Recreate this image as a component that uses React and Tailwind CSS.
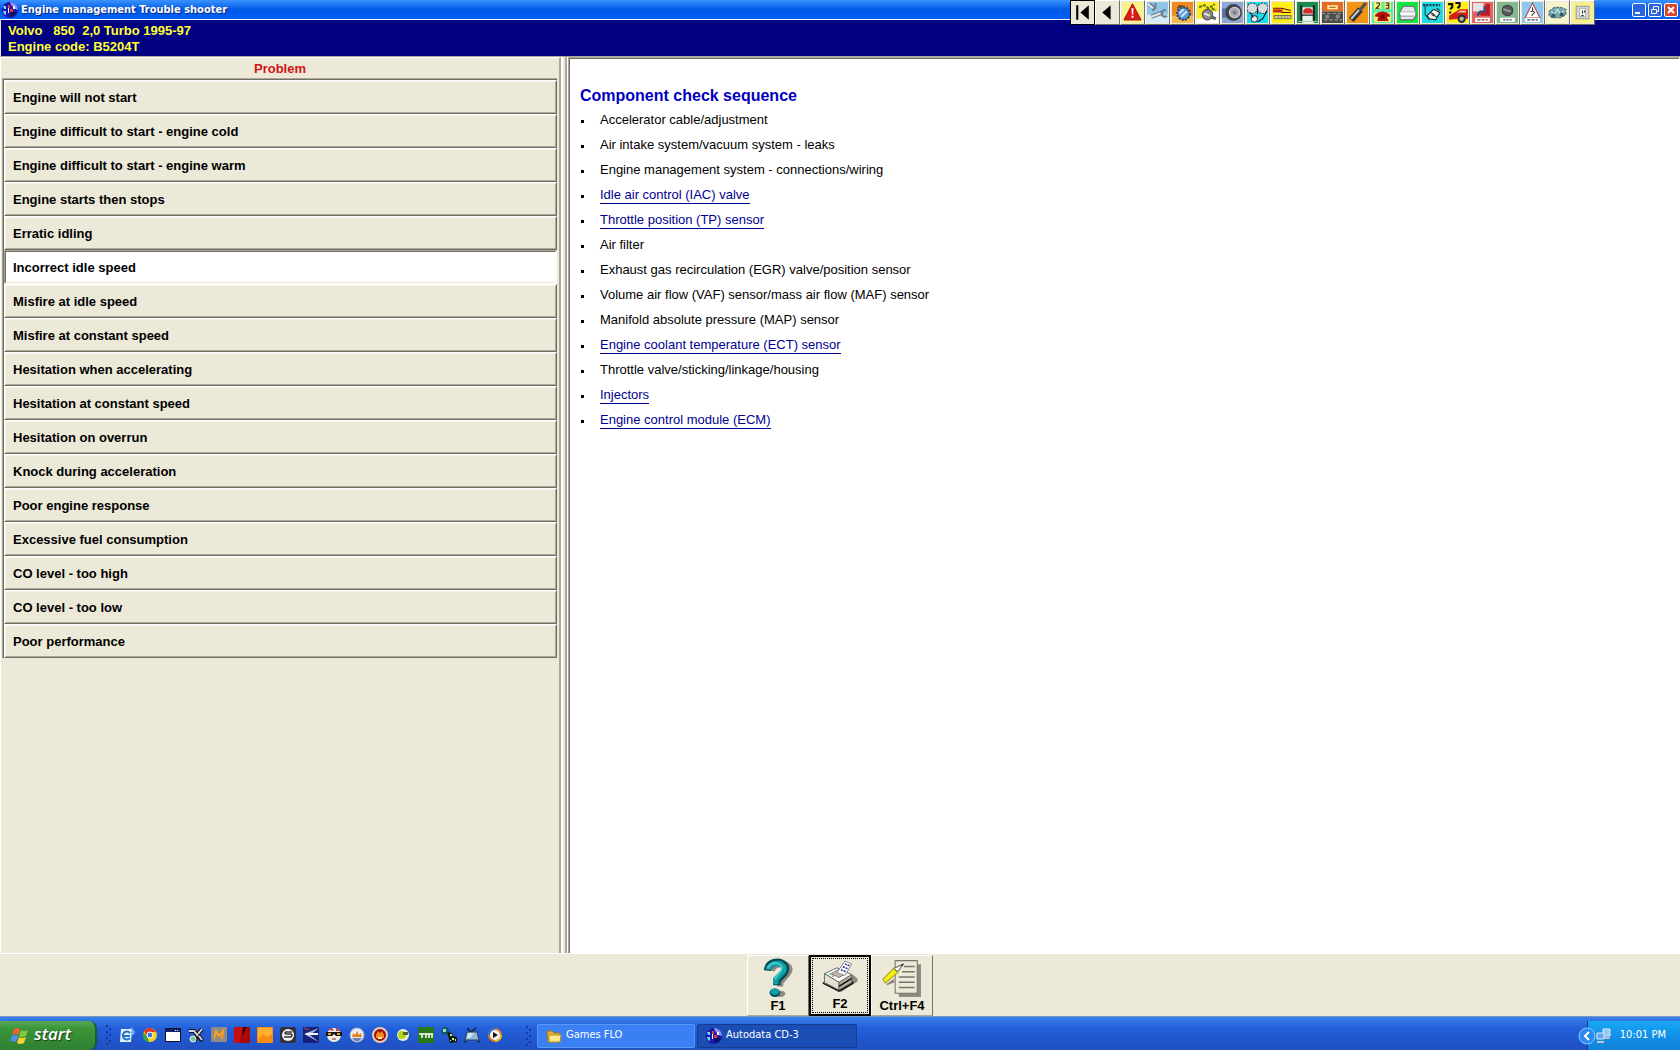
import { useState } from "react";

const problems = [
  "Engine will not start",
  "Engine difficult to start - engine cold",
  "Engine difficult to start - engine warm",
  "Engine starts then stops",
  "Erratic idling",
  "Incorrect idle speed",
  "Misfire at idle speed",
  "Misfire at constant speed",
  "Hesitation when accelerating",
  "Hesitation at constant speed",
  "Hesitation on overrun",
  "Knock during acceleration",
  "Poor engine response",
  "Excessive fuel consumption",
  "CO level - too high",
  "CO level - too low",
  "Poor performance",
];

const checks = [
  { text: "Accelerator cable/adjustment" },
  { text: "Air intake system/vacuum system - leaks" },
  { text: "Engine management system - connections/wiring" },
  { text: "Idle air control (IAC) valve", link: true },
  { text: "Throttle position (TP) sensor", link: true },
  { text: "Air filter" },
  { text: "Exhaust gas recirculation (EGR) valve/position sensor" },
  { text: "Volume air flow (VAF) sensor/mass air flow (MAF) sensor" },
  { text: "Manifold absolute pressure (MAP) sensor" },
  { text: "Engine coolant temperature (ECT) sensor", link: true },
  { text: "Throttle valve/sticking/linkage/housing" },
  { text: "Injectors", link: true },
  { text: "Engine control module (ECM)", link: true },
];

// toolbar drawings, 20x20 each
const tools = [
  {
    name: "First",
    art: <path fill="#000" d="M4 3h2v14H4zM16 3v14L8 10z" />,
  },
  { name: "Back", art: <path fill="#000" d="M13 3v14L5 10z" /> },
  {
    name: "Warnings",
    art: (
      <>
        <path fill="#fbf38a" d="M0 0h20v20H0z" />
        <path fill="#e01818" stroke="#b01010" strokeLinejoin="round" d="M10 2 18 17H2z" />
        <path fill="#fff" d="M9 6h2l-.4 6H9.400zM9 13h2v2H9z" />
      </>
    ),
  },
  {
    name: "Repair",
    art: (
      <>
        <path fill="#8fc6ea" d="M0 0h20v20H0z" />
        <path fill="#d8ecf8" d="M0 12h20v8H0z" />
        <path stroke="#6c7c8c" strokeWidth="4" d="M2 2l6 5M4 14l11-4" />
        <path stroke="#dfe6ec" strokeWidth="2" d="M1 2l6 5M4 14l11-4" />
        <path stroke="#708090" strokeWidth="2" d="M18 8a3 3 0 1 0 1 5M8 1v4L5 8" />
      </>
    ),
  },
  {
    name: "Timing",
    art: (
      <>
        <path fill="#f28a1c" d="M0 0h20v20H0z" />
        <path fill="#f8b850" d="M0 13h20v7H0z" />
        <circle cx="11" cy="11" r="6" fill="#5c9ad4" stroke="#24446c" strokeWidth="2" strokeDasharray="2 1" />
        <path stroke="#c8e4fa" strokeWidth="2" d="M7 11l4-4M9 14l5-5" />
        <path stroke="#303030" d="M6 4h6M5 6l3-3" />
      </>
    ),
  },
  {
    name: "Engine",
    art: (
      <>
        <path fill="#fff" d="M0 0h20v20H0z" />
        <path fill="#ffee22" d="M0 0h20v9H0zM0 9h5v7H0z" />
        <path stroke="#60780c" strokeWidth="2" strokeDasharray="3 1" d="M2 5l5-2 4 3 6-4M14 6l4 2" />
        <circle cx="10" cy="12" r="5" fill="#8c8c84" stroke="#555" />
        <path stroke="#e8e8e0" strokeWidth="2" d="M7 11l5 2" />
        <path stroke="#666" strokeWidth="3" d="M13 14l5 2" />
      </>
    ),
  },
  {
    name: "Wheels",
    art: (
      <>
        <path fill="#8fa6d8" d="M0 0h20v20H0z" />
        <path fill="#5a74b0" d="M0 6h8v9H0z" />
        <circle cx="11" cy="10" r="8" fill="#404448" />
        <circle cx="12" cy="10" r="5" fill="#a8acb0" stroke="#d4d4d4" />
        <circle cx="12" cy="10" r="2" fill="#7c8084" />
      </>
    ),
  },
  {
    name: "Belts",
    art: (
      <>
        <path fill="#18e0ee" d="M0 0h20v20H0z" />
        <circle cx="5" cy="6" r="5" fill="#d8dcdc" stroke="#445" strokeDasharray="2 1" />
        <circle cx="15" cy="6" r="5" fill="#d8dcdc" stroke="#445" strokeDasharray="2 1" />
        <circle cx="7" cy="16" r="3" fill="#eee" stroke="#445" />
        <path stroke="#112" d="M3 10l3 5M19 8l-4 8-5 3M10 6v6" />
      </>
    ),
  },
  {
    name: "Tools",
    art: (
      <>
        <path fill="#fff01c" d="M0 0h20v20H0z" />
        <path fill="#c42818" d="M1 7h9v3H1z" />
        <path stroke="#6a1010" d="M1 6h8l9 2M9 10h9" />
        <path fill="#d8d8b0" stroke="#77773c" d="M2 13h16v3H2z" />
        <path stroke="#77773c" d="M6 14v2M9 14v2M12 14v2M15 14v2" />
      </>
    ),
  },
  {
    name: "Lift",
    art: (
      <>
        <path fill="#1a8a50" d="M0 0h20v20H0z" />
        <path fill="#e4f4ea" d="M5 5h11v15H5z" />
        <path fill="#222" d="M3 3h2v15H3zM15 3h2v15h-2zM4 12h12v1H4z" />
        <path fill="#d02828" d="M6 8l2-2h5l2 2v3H6z" />
        <path fill="#a8c8b4" d="M1 18h18v1H1z" />
      </>
    ),
  },
  {
    name: "Dashboard",
    art: (
      <>
        <path fill="#e46c20" d="M0 0h20v9H0z" />
        <path fill="#4c4c4c" d="M0 9h20v11H0z" />
        <path fill="#ffe9a0" d="M5 3h10v4H5z" />
        <path stroke="#a05010" d="M7 5h6" />
        <path stroke="#989898" strokeDasharray="3 2" d="M0 11h20M2 17h17" />
        <circle cx="5" cy="14" r="2" fill="#888" />
        <circle cx="15" cy="14" r="2" fill="#888" />
      </>
    ),
  },
  {
    name: "Spark plug",
    art: (
      <>
        <path fill="#f49414" d="M0 0h20v20H0z" />
        <path stroke="#373737" strokeWidth="6" d="M4 17l9-10" />
        <path stroke="#c8c8c8" strokeWidth="2" d="M4 16l8-9" />
        <path stroke="#505050" strokeWidth="3" d="M12 8l6-7" />
      </>
    ),
  },
  {
    name: "Key codes",
    art: (
      <>
        <path fill="#58eca8" d="M0 0h20v20H0z" />
        <path fill="#fff06c" d="M2 0h7v7H2zM12 0h6v7h-6zM2 10h16v9H2z" />
        <path stroke="#222" d="M4 1h3v2L4 6h3M13 1h3v5h-3M13 3h3" />
        <path fill="#b81010" d="M3 12q7-6 14 0v2h-3l2 4H5l1-4H3z" />
        <circle cx="10" cy="14" r="2" fill="#780808" />
      </>
    ),
  },
  {
    name: "Car models",
    art: (
      <>
        <path fill="#10e840" d="M0 0h20v20H0z" />
        <path fill="#e6e6e6" stroke="#667" d="M3 9l3-5h10l2 5v5l-3 3H3v-7z" />
        <path fill="#9da5a8" d="M3 9h15v1H3zM3 13h14v1H3z" />
        <path fill="#fff" d="M3 10h14v2H3z" />
      </>
    ),
  },
  {
    name: "Injection",
    art: (
      <>
        <path fill="#20dce4" d="M0 0h20v20H0z" />
        <path stroke="#153c44" strokeWidth="2" strokeDasharray="2 1" d="M1 3h16" />
        <path stroke="#153c44" d="M3 3v9l4 5" />
        <path fill="#f4f4f4" stroke="#222" d="M5 13l6-6 6 3-4 7-6-1z" />
        <path stroke="#222" d="M9 12l5 2M14 6l3 2M8 10l4 2" />
      </>
    ),
  },
  {
    name: "Trouble shooter",
    art: (
      <>
        <path fill="#fff01c" d="M0 0h20v20H0z" />
        <path stroke="#111" strokeWidth="2" d="M1 2h4v3L3 7M3 9v2M8 1h4v3l-2 2" />
        <path fill="#d02018" d="M2 13l5-3 5-3h8v9h-7l-11 1z" />
        <path fill="#f4c0a0" d="M9 10l4-2h5v2z" />
        <circle cx="14" cy="16" r="4" fill="#333" />
        <circle cx="14" cy="16" r="2" fill="#bbb" />
      </>
    ),
  },
  {
    name: "Airbag",
    art: (
      <>
        <path fill="#e06464" d="M0 0h20v20H0z" />
        <path fill="#e4e4e8" d="M1 1h10v8H1z" />
        <path fill="#c01820" d="M13 2h4v11H8v-3h5z" />
        <path stroke="#284878" strokeWidth="2" d="M12 4v5H8l-3 4" />
        <path fill="#fff" d="M3 15h14v4H3z" />
        <path stroke="#833" strokeDasharray="3 1" d="M5 17h10" />
      </>
    ),
  },
  {
    name: "Air conditioning",
    art: (
      <>
        <path fill="#84b890" d="M0 0h20v20H0z" />
        <circle cx="10" cy="8" r="5" fill="#555b58" stroke="#38403c" />
        <path stroke="#98a09c" strokeWidth="2" d="M6 7l7 2" />
        <path fill="#fff" d="M3 15h14v4H3z" />
        <path stroke="#345" strokeDasharray="2 1" d="M6 17h8" />
      </>
    ),
  },
  {
    name: "ABS",
    art: (
      <>
        <path fill="#8cc8f0" d="M0 0h20v20H0z" />
        <path fill="#fff" stroke="#b84848" d="M10 1l7 14H3z" />
        <path stroke="#333" d="M10 5v3l2 2-3 3M8 9h2" />
        <path fill="#fff" d="M3 15h14v4H3z" />
        <path stroke="#345" strokeDasharray="3 1" d="M5 17h10" />
      </>
    ),
  },
  {
    name: "Wiring",
    art: (
      <>
        <path fill="#f6f4cc" d="M0 0h20v20H0z" />
        <path fill="#78a8b0" stroke="#486c74" strokeDasharray="3 1" d="M2 9l5-4h6l5 2v5l-5 3H5l-3-2z" />
        <path stroke="#d8ecec" d="M4 9l3 3 3-5 3 5 3-4" />
        <circle cx="6" cy="13" r="2" fill="#345c64" />
        <circle cx="14" cy="12" r="2" fill="#345c64" />
      </>
    ),
  },
  {
    name: "Immobilizer",
    art: (
      <>
        <path fill="#f8f088" d="M0 0h20v20H0z" />
        <path fill="#ddd" stroke="#999" d="M4 4h12v12H4z" />
        <path fill="#f8f8f8" stroke="#aaa" d="M7 6h6v8H7z" />
        <path stroke="#222" d="M10 8v3M12 8v2M9 13h2" />
      </>
    ),
  },
];

// quick launch drawings, 16x16 each
const launchers = [
  {
    name: "Internet Explorer",
    art: (
      <>
        <path fill="#e8f4fc" d="M2 2h11l-1 13H1z" />
        <path stroke="#1c78c8" strokeWidth="2" d="M11 9H5M11 6a4 4 0 1 0 0 5" />
        <path stroke="#6cb8f0" strokeWidth="2" d="M12 1l3 4-2 3" />
      </>
    ),
  },
  {
    name: "Chrome",
    art: (
      <>
        <circle cx="8" cy="8" r="7" fill="#f8d020" />
        <path fill="#dc3828" d="M2 4a7 7 0 0 1 12 1H8L5 9z" />
        <path fill="#38a048" d="M1.500 5 6 11l1 4A7 7 0 0 1 1.500 5z" />
        <circle cx="8" cy="8" r="3" fill="#3878d8" stroke="#fff" />
      </>
    ),
  },
  {
    name: "Command window",
    art: (
      <>
        <path fill="#fff" stroke="#112" d="M.5 1.500h15v13H.5z" />
        <path fill="#102070" d="M1 2h14v3H1z" />
        <path fill="#fff" d="M10 3h1v1h-1zM12 3h1v1h-1z" />
      </>
    ),
  },
  {
    name: "Utilities",
    art: (
      <>
        <path stroke="#111" strokeWidth="4" d="M1 4h5l4 5M14 2l-4 5-3 6M11 9l3 5" />
        <path stroke="#d8d8d8" strokeWidth="2" d="M1 4h5l4 5M14 2l-4 5M11 9l3 4" />
        <circle cx="5" cy="12" r="3" fill="#70c890" stroke="#eee" />
      </>
    ),
  },
  {
    name: "M player",
    art: (
      <>
        <rect width="16" height="15" rx="1" fill="#8c8c88" />
        <path stroke="#ffa018" strokeWidth="2" d="M3 12l2-8 3 5 4-5-1 8" />
      </>
    ),
  },
  {
    name: "Red app",
    art: (
      <>
        <path fill="#a80808" d="M0 0h16v16H0z" />
        <path fill="#c81010" d="M0 0h9L5 16H0z" />
        <path fill="#300404" d="M9 0h4L8 9z" />
      </>
    ),
  },
  {
    name: "Orange app",
    art: (
      <>
        <rect width="16" height="16" rx="1" fill="#f88c10" />
        <path fill="#ffb030" d="M1 1h14v6l-5 3-4-3-5 5z" />
      </>
    ),
  },
  {
    name: "Sync",
    art: (
      <>
        <rect width="16" height="16" rx="2" fill="#303438" />
        <circle cx="8" cy="8" r="6" fill="#f4f4f4" />
        <path stroke="#303438" strokeWidth="1.500" d="M12 5H6q-2 1 0 2h5q2 1 0 3H4" />
      </>
    ),
  },
  {
    name: "Jet",
    art: (
      <>
        <path fill="#182078" d="M0 0h16v16H0z" />
        <path fill="#a8c0e0" d="M16 1 1 7l15 8-9-7z" />
        <path stroke="#f0f4fc" strokeWidth="2" d="M3 7h12" />
        <path stroke="#c84444" d="M1 1l5 2" />
      </>
    ),
  },
  {
    name: "Face",
    art: (
      <>
        <circle cx="8" cy="8" r="7" fill="#f4ede4" />
        <path fill="#d83020" d="M3 3l3-2 2 3zM10 1l4 3h-4z" />
        <path fill="#181818" d="M0 5h16v4h-6L8 7 6 9H0z" />
        <path fill="#e8a020" d="M2 6h3v2H2zM11 6h3v2h-3z" />
        <path stroke="#882020" d="M6 12h4" />
      </>
    ),
  },
  {
    name: "Castle",
    art: (
      <>
        <circle cx="8" cy="8" r="7" fill="#e8ecf4" stroke="#a8b0c8" />
        <path fill="#e88020" d="M3 10l1-4 2 2 2-4 2 4 2-2 1 4z" />
        <path fill="#6880b0" d="M3 11h10l-3 3H6z" />
      </>
    ),
  },
  {
    name: "Red castle",
    art: (
      <>
        <circle cx="8" cy="8" r="7" fill="#981010" stroke="#e8c8b8" strokeWidth="2" />
        <path fill="#f88820" d="M4 11V8l2-4 2 2 2-2 2 4v3z" />
        <path fill="#fff0a0" d="M6 10h4v2H6z" />
      </>
    ),
  },
  {
    name: "Lime",
    art: (
      <>
        <circle cx="8" cy="8" r="6" fill="#e8f0e0" />
        <circle cx="7" cy="8" r="4" fill="#b8d418" />
        <path fill="#486828" d="M8 5h5v3H8z" />
      </>
    ),
  },
  {
    name: "TM",
    art: (
      <>
        <path fill="#287818" d="M0 0h16v16H0z" />
        <path stroke="#fff" strokeWidth="1.500" d="M1 7h14M4 7v4M8 11V7M11 7v4M14 7v4" />
      </>
    ),
  },
  {
    name: "Satellite",
    art: (
      <>
        <circle cx="4" cy="4" r="4" fill="#185868" />
        <path fill="#98e0d0" d="M2 2h3v3H2z" />
        <path fill="#101810" d="M6 5l5 1 1 3 4 1v5l-7 1-1-4z" />
        <path fill="#d0f090" d="M9 7h2v2H9zM11 11h2v2h-2zM14 12h1v2h-1zM9 13h1v1H9z" />
      </>
    ),
  },
  {
    name: "TV",
    art: (
      <>
        <path stroke="#182030" strokeWidth="1.500" d="M3 1l4 4 5-4M2 14l-2 1M14 14l2 1" />
        <path fill="#90b8d8" stroke="#304058" d="M3 5h10l2 8H1z" />
        <path fill="#d4e8f4" d="M4 6h6l-4 5H3z" />
      </>
    ),
  },
  {
    name: "Media Player",
    art: (
      <>
        <circle cx="8" cy="8" r="7" fill="#e87820" />
        <path fill="#3078d0" d="M8 1a7 7 0 0 0-7 7h7z" />
        <path fill="#e0c028" d="M15 8a7 7 0 0 1-7 7V8z" />
        <circle cx="8" cy="8" r="5" fill="#f4f4f4" />
        <path fill="#111" d="M6 5l5 3-5 3z" />
      </>
    ),
  },
];

const AppIcon = () => (
  <svg viewBox="0 0 16 16" className="w-4 h-4 shrink-0" aria-hidden="true">
    <circle cx="8" cy="8" r="8" fill="#1818b0" />
    <path fill="#8c94f0" d="M8 0a8 8 0 0 1 8 8l-3-1-4-4z" />
    <path fill="#101060" d="M9 10h6l-3 4-4 1z" />
    <path fill="#70d8f0" d="M1 4h3v3H2zM1 9h3v4l-2-1z" />
    <path fill="#e83838" d="M6 3h2v3H6zM8 7h3v3H8z" />
    <path fill="#f4f4ff" d="M6 6h1v5H6zM11 4h2v3h-2z" />
  </svg>
);

const HelpArt = () => (
  <svg viewBox="0 0 38 38" fill="none" className="w-10 h-10" aria-hidden="true">
    <path stroke="#8c8a80" strokeWidth="6" d="M13 12q2-7 11-6 9 2 4 9l-7 8v4" />
    <ellipse cx="21" cy="34" rx="5" ry="3" fill="#8c8a80" />
    <path stroke="#064c54" strokeWidth="7" d="M9 12q1-8 10-8 10 2 6 10l-7 7v5" />
    <path stroke="#10a0a8" strokeWidth="5" d="M10 11q1-6 9-6 8 2 5 8l-7 7v5" />
    <path stroke="#50d0d0" strokeWidth="1.500" d="M9 10q3-6 9-5 7 2 4 7l-6 8" />
    <ellipse cx="16" cy="33" rx="5" ry="4" fill="#064c54" />
    <ellipse cx="16" cy="32" rx="4" ry="3" fill="#10a0a8" />
  </svg>
);

const PrintArt = () => (
  <svg viewBox="0 0 38 38" fill="none" className="w-10 h-10" aria-hidden="true">
    <path fill="#8c8a80" d="M20 34l17-11v-3l-5-4-14 16z" />
    <path fill="#fff" stroke="#666" d="M3 15l13-6 15 7-13 8z" />
    <path fill="#e4e0d0" stroke="#666" d="M3 15v9l15 8v-8z" />
    <path fill="#b4b0a0" stroke="#666" d="M18 24v8l13-8v-8z" />
    <path stroke="#111" strokeWidth="1.500" d="M2 24v1l16 8 14-8v-2M18 28l13-8" />
    <path fill="#c0bcae" stroke="#777" d="M10 15l7-4 8 4-7 4z" />
    <path fill="#fff" stroke="#888" d="M16 14l8-12 7 3-7 12z" />
    <path stroke="#2020a0" strokeWidth="1.500" strokeDasharray="2 1" d="M24 5l5 2M22 8l5 2M20 11l5 2" />
    <path fill="#20b040" d="M8 15h3v1H8z" />
    <path fill="#d02020" d="M11 17h2v1h-2z" />
  </svg>
);

const NotesArt = () => (
  <svg viewBox="0 0 38 38" fill="none" className="w-10 h-10" aria-hidden="true">
    <path fill="#8c8a80" d="M16 6h21v31H16z" />
    <path fill="#ece9d8" stroke="#777568" d="M12.500 2.500h21v31h-21z" />
    <path stroke="#777568" strokeWidth="1.500" d="M21 8h10M19 13h12M16 18h15M16 23h15M16 28h15" />
    <path fill="#8c8a80" d="M4 25l7-5 1 3-7 3z" />
    <path fill="#fff" stroke="#666" d="M11 10l9-4-5 7z" />
    <path fill="#f8f010" stroke="#a8a020" d="M1 20l10-10 4 4-4 3-8 7z" />
    <path fill="#333" d="M18 6h3l-2 2z" />
  </svg>
);

const functionKeys = [
  { label: "F1", title: "Help", Art: HelpArt },
  { label: "F2", title: "Print", Art: PrintArt, focused: true },
  { label: "Ctrl+F4", title: "Notes", Art: NotesArt },
];

const Grip = () => (
  <svg viewBox="0 0 6 20" className="w-1.5 h-5 shrink-0" aria-hidden="true">
    <path stroke="#123a9c" strokeWidth="2" strokeDasharray="2 4" d="M2 0v20" />
    <path stroke="#123a9c" strokeWidth="2" strokeDasharray="2 4" strokeDashoffset="3" d="M5 0v20" />
  </svg>
);

const TitleBar = () => (
  <header className="flex items-center h-5 shrink-0 pl-0.5 pr-px gap-[3px] border-b border-white bg-linear-to-b from-[#3a93ff] via-[#0058e6] to-[#0062f8]">
    <AppIcon />
    <h1 className="flex-1 font-['DejaVu_Sans_Condensed'] font-bold text-[11px] leading-4 text-white [text-shadow:1px_1px_0_#0a2a80]">
      Engine management Trouble shooter
    </h1>
    <div className="flex gap-0.5 pr-px">
      <button
        aria-label="Minimize"
        className="w-3.5 h-3.5 rounded-xs border border-white bg-[#2a62e0]"
      >
        <svg viewBox="0 0 12 12">
          <path fill="#fff" d="M2 8h5v2H2z" />
        </svg>
      </button>
      <button
        aria-label="Restore"
        className="w-3.5 h-3.5 rounded-xs border border-white bg-[#2a62e0]"
      >
        <svg viewBox="0 0 12 12" fill="none" stroke="#fff">
          <path d="M4.500 5V2.500h5v5H8M2.500 5.500h5v4h-5z" />
        </svg>
      </button>
      <button
        aria-label="Close"
        className="w-3.5 h-3.5 rounded-xs border border-white bg-[#d8452a]"
      >
        <svg viewBox="0 0 12 12" stroke="#fff" strokeWidth="2">
          <path d="M3 3l6 6M9 3l-6 6" />
        </svg>
      </button>
    </div>
  </header>
);

const Toolbar = () => (
  <nav aria-label="Modules" className="absolute top-0 right-[85px] flex">
    {tools.map((tool, i) => (
      <button
        key={tool.name}
        aria-label={tool.name}
        className={`w-[25px] h-[25px] p-px border bg-[#ece9d8] ${
          i === 0
            ? "border-black"
            : "border-t-white border-l-white border-r-[#716f64] border-b-[#716f64]"
        }`}
      >
        <svg viewBox="0 0 20 20" fill="none" className="w-full h-full">
          {tool.art}
        </svg>
      </button>
    ))}
  </nav>
);

const Taskbar = () => (
  <footer className="flex items-stretch h-[34px] shrink-0 font-['DejaVu_Sans_Condensed'] text-[11px] text-white bg-linear-to-b from-[#3a80e4] via-[#245edb] via-35% to-[#1f50c0] border-t border-[#7a98c8]">
    <button className="flex items-center gap-1 w-[97px] mt-1 pl-2.5 rounded-r-lg bg-linear-to-b from-[#5aa85a] via-[#3a963a] via-25% to-[#2f8030] border-r-2 border-[#1d5a30] shadow-md">
      <svg viewBox="0 0 20 20" className="w-5 h-5" aria-hidden="true">
        <path fill="#f06030" d="M4 3q3-2 6 0L8 9q-3-2-6 0z" />
        <path fill="#80c840" d="M11 4q3 2 7 0l-2 6q-4 2-7 0z" />
        <path fill="#5090f0" d="M2 10q3-2 6 0l-2 6q-3-2-6 0z" />
        <path fill="#f8d030" d="M9 11q3 2 7 0l-2 6q-4 2-7 0z" />
      </svg>
      <span className="font-['Open_Sans'] italic font-semibold text-[17px] leading-5 pb-1 [text-shadow:1px_1px_1px_#1a3a1a]">
        start
      </span>
    </button>
    <div className="flex items-center pl-2 pt-0.5">
      <Grip />
      <div className="flex items-center gap-[7px] pl-2">
        {launchers.map((app) => (
          <button key={app.name} aria-label={app.name} className="w-4 h-4">
            <svg viewBox="0 0 16 16" fill="none" className="w-4 h-4">
              {app.art}
            </svg>
          </button>
        ))}
      </div>
    </div>
    <div className="flex flex-1 items-center gap-0.5 pl-[22px] pt-1">
      <Grip />
      <button className="flex items-center gap-1 w-[158px] h-6 ml-1 pl-2 rounded-xs bg-[#3b80f2] border border-[#5a98f8]">
        <svg viewBox="0 0 16 16" className="w-4 h-4" aria-hidden="true">
          <path fill="#e0b030" stroke="#a87818" d="M1 3h5l2 2h6v9H2z" />
          <path fill="#ffe888" stroke="#b89030" d="M3 7h12l-1 7H3z" />
        </svg>
        Games FLO
      </button>
      <button className="flex items-center gap-1 w-[160px] h-6 pl-2 rounded-xs bg-[#1b4eb4] border border-[#153c90]">
        <AppIcon />
        Autodata CD-3
      </button>
    </div>
    <div className="flex items-center gap-2 pr-3.5 mt-1 border-l border-[#0a3a90] bg-linear-to-b from-[#18a8f4] via-[#1290e8] to-[#0f82d8]">
      <button aria-label="Show hidden icons" className="w-4.5 h-4.5 -ml-2.5">
        <svg viewBox="0 0 18 18">
          <circle cx="9" cy="9" r="8" fill="#2a8cf0" stroke="#8cc8ff" />
          <path fill="none" stroke="#fff" strokeWidth="2" d="M11 5L7 9l4 4" />
        </svg>
      </button>
      <svg viewBox="0 0 16 16" className="w-4 h-4 -ml-2" aria-hidden="true">
        <path fill="#90c8f4" stroke="#e0ecf8" d="M7 1h7v7H7z" />
        <path fill="#b8bcc8" d="M8 9h6v2H8z" />
        <path fill="#60a8e8" stroke="#dce8f4" d="M1 5h7v6H1z" />
        <path fill="#c8c4c8" d="M1 13h7v2H1z" />
      </svg>
      <time>10:01 PM</time>
    </div>
  </footer>
);

const App = () => {
  const [selected, setSelected] = useState(5);

  return (
    <div className="relative flex flex-col min-h-screen bg-[#ece9d8] font-['Liberation_Sans',sans-serif] text-black">
      <TitleBar />
      <Toolbar />
      <div className="h-9 shrink-0 ml-px pl-[7px] pt-[3px] bg-[#000080] font-bold text-[13px] leading-4 text-[#ffff33]">
        <p className="whitespace-pre">Volvo   850  2,0 Turbo 1995-97</p>
        <p>Engine code: B5204T</p>
      </div>

      <main className="flex flex-1 border-t border-[#aca899]">
        <section className="w-[calc(100%/3+1px)] pt-0.5 px-px border-t border-l border-white border-r-2 border-r-[#aca899]">
          <h2 className="h-[18px] text-center font-bold text-[13px] leading-[18px] text-[#d01414]">
            Problem
          </h2>
          <div className="mr-px border-t border-l border-[#aca899]">
            <ul className="border-t border-l border-[#716f64]">
              {problems.map((problem, i) => (
                <li key={problem}>
                  <button
                    onClick={() => setSelected(i)}
                    className={`block w-full h-[34px] text-left font-bold text-[13px] leading-4 border ${
                      i === selected
                        ? "bg-white border-t-[#aca899] border-l-[#aca899] border-r-white border-b-white"
                        : "border-t-white border-l-white border-r-[#716f64] border-b-[#716f64]"
                    }`}
                  >
                    <span
                      className={`flex items-center h-full pl-[7px] pt-0.5 border ${
                        i === selected
                          ? "border-t-[#716f64] border-l-[#716f64] border-r-white border-b-[#ece9d8]"
                          : "border-t-[#f8f6ee] border-l-[#f8f6ee] border-r-[#aca899] border-b-[#aca899]"
                      }`}
                    >
                      {problem}
                    </span>
                  </button>
                </li>
              ))}
            </ul>
          </div>
        </section>

        <div className="w-[7px] border-l-2 border-white flex justify-end">
          <div className="w-[3px] border-l-2 border-[#aca899] bg-white" />
        </div>

        <section className="flex-1 border-l border-t border-[#aca899] border-r border-r-white">
          <div className="h-full pl-2.5 pt-[26px] bg-white border-t border-l border-[#716f64]">
            <h2 className="font-bold text-[16px] leading-[22px] text-[#0000c0]">
              Component check sequence
            </h2>
            <ul className="text-[13px]">
              {checks.map((check) => (
                <li key={check.text} className="flex items-center h-[25px] leading-4">
                  <span className="w-[3px] h-[3px] mt-1 ml-px mr-4 bg-black" />
                  {check.link ? (
                    <a href="#" className="mt-px text-[#000090] border-b border-[#000090]">
                      {check.text}
                    </a>
                  ) : (
                    check.text
                  )}
                </li>
              ))}
            </ul>
          </div>
        </section>
      </main>

      <div className="flex justify-center shrink-0 h-[63px] pt-px border-t border-white">
        {functionKeys.map(({ label, title, Art, focused }) => (
          <button
            key={label}
            title={title}
            className={`w-[62px] font-bold text-[13px] leading-4 ${
              focused
                ? "p-px border-2 border-black"
                : "px-0.5 py-px border border-t-white border-l-white border-r-[#716f64] border-b-[#aca899]"
            }`}
          >
            <span
              className={`flex flex-col items-center justify-end h-full ${
                focused ? "border border-dotted border-black" : ""
              }`}
            >
              <Art />
              {label}
            </span>
          </button>
        ))}
      </div>

      <Taskbar />
    </div>
  );
};
export default App;
